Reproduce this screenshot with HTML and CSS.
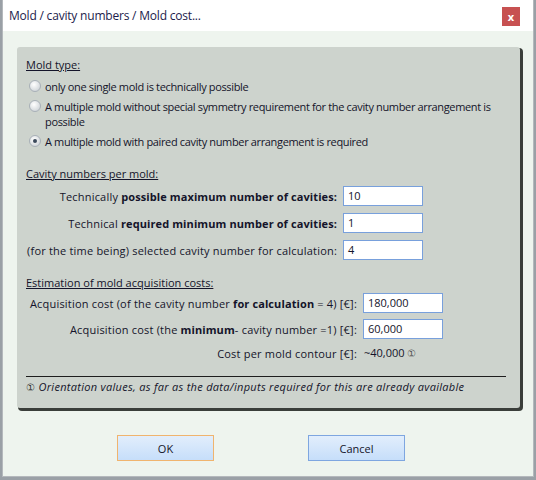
FILE: index.html
```html
<!DOCTYPE html>
<html lang="en">
<head>
    <meta charset="UTF-8">
    <meta name="viewport" content="width=device-width, initial-scale=1.0">
    <title>Mold / cavity numbers / Mold cost...</title>
    <link rel="stylesheet" href="styles.css">
</head>
<body>

    <div class="dialog">
        <div class="titlebar">
            <span class="title">Mold / cavity numbers / Mold cost...</span>
            <span class="close-btn">x</span>
        </div>

        <div class="content">
            <div class="panel">
                <div class="section-title">Mold type:</div>
                <div class="radio-list">
                    <div class="radio-row">
                        <span class="radio"></span>
                        <span>only one single mold is technically possible</span>
                    </div>
                    <div class="radio-row">
                        <span class="radio"></span>
                        <span>A multiple mold without special symmetry requirement for the cavity number arrangement is possible</span>
                    </div>
                    <div class="radio-row">
                        <span class="radio checked"></span>
                        <span>A multiple mold with paired cavity number arrangement is required</span>
                    </div>
                </div>

                <div class="section-title cavity-title">Cavity numbers per mold:</div>
                <div class="form-grid cavity-grid">
                    <div class="label">Technically <b>possible maximum number of cavities:</b></div>
                    <div class="field">10</div>
                    <div class="label">Technical <b>required minimum number of cavities:</b></div>
                    <div class="field">1</div>
                    <div class="label">(for the time being) selected cavity number for calculation:</div>
                    <div class="field">4</div>
                </div>

                <div class="section-title cost-title">Estimation of mold acquisition costs:</div>
                <div class="form-grid cost-grid">
                    <div class="label">Acquisition cost (of the cavity number <b>for calculation</b> = 4) [€]:</div>
                    <div class="field">180,000</div>
                    <div class="label">Acquisition cost (the <b>minimum</b>- cavity number =1) [€]:</div>
                    <div class="field">60,000</div>
                    <div class="label">Cost per mold contour [€]:</div>
                    <div class="value">~40,000 <span class="info">&#9312;</span></div>
                </div>

                <div class="footnote"><span class="info">&#9312;</span> Orientation values, as far as the data/inputs required for this are already available</div>
            </div>
        </div>

        <div class="buttons">
            <button class="ok-btn">OK</button>
            <button>Cancel</button>
        </div>
    </div>

</body>
</html>
```

FILE: styles.css
```css
body {
    margin: 0;
    padding: 0;
    background-color: #9aa0a6;
    font-family: "Open Sans", "Noto Sans", sans-serif;
    font-size: 11px;
    color: #14142a;
}
.dialog {
    margin-left: 2px;
    width: 532px;
    height: 477px;
    box-sizing: border-box;
    border: 1px solid #b4b8bc;
    border-top: none;
    background-color: #eef4ee;
    display: flex;
    flex-direction: column;
}
.titlebar {
    height: 31px;
    background-color: white;
    display: flex;
    align-items: center;
    justify-content: space-between;
    padding-left: 6px;
    padding-right: 13px;
}
.title {
    font-size: 12px;
    letter-spacing: -0.2px;
    color: #1c1c4c;
}
.close-btn {
    width: 18px;
    height: 19px;
    background-color: #c75151;
    color: white;
    font-weight: bold;
    font-size: 11px;
    display: flex;
    align-items: center;
    justify-content: center;
    margin-top: 2px;
}
.content {
    padding: 16px 11px 0 14px;
}
.panel {
    width: 503px;
    box-sizing: border-box;
    background-color: #cdd3cd;
    border-radius: 3px;
    box-shadow: 2px 2px 0 1px #3a3e3a;
    padding: 10px 12px 13px 9px;
    line-height: 15px;
}
.section-title {
    text-decoration: underline;
}
.radio-list {
    margin-top: 7px;
    display: flex;
    flex-direction: column;
    gap: 5px;
    letter-spacing: -0.35px;
}
.radio-row {
    display: flex;
    align-items: flex-start;
    gap: 4px;
    padding-left: 3px;
}
.radio {
    flex: none;
    width: 10px;
    height: 10px;
    margin-top: 1px;
    border-radius: 50%;
    border: 1px solid #a8b0b8;
    background: radial-gradient(circle at 40% 35%, #ffffff, #d6dade 70%);
    position: relative;
}
.radio.checked::after {
    content: "";
    position: absolute;
    left: 3px;
    top: 3px;
    width: 4px;
    height: 4px;
    border-radius: 50%;
    background-color: #3c4a5c;
}
.cavity-title {
    margin-top: 17px;
}
.form-grid {
    display: grid;
    align-items: center;
    column-gap: 6px;
}
.cavity-grid {
    grid-template-columns: 311px 80px;
    row-gap: 7px;
    margin-top: 5px;
}
.cost-grid {
    grid-template-columns: 331px 80px;
    row-gap: 6px;
    margin-top: 3px;
}
.label {
    text-align: right;
    white-space: nowrap;
    letter-spacing: 0.2px;
}
.label b {
    letter-spacing: 0.1px;
}
.field {
    height: 20px;
    box-sizing: border-box;
    border: 1px solid #78a0dc;
    background-color: white;
    padding-left: 4px;
    line-height: 18px;
}
.value {
    padding-left: 1px;
}
.info {
    color: #555;
    font-size: 10px;
}
.cost-title {
    margin-top: 15px;
}
.footnote {
    margin-top: 15px;
    border-top: 1px solid #1e1e1e;
    padding-top: 2px;
    font-style: italic;
    letter-spacing: 0.3px;
    margin-right: 2px;
}
.footnote .info {
    font-style: normal;
    color: #333;
}
.buttons {
    display: flex;
    gap: 94px;
    padding-left: 114px;
    margin-top: 27px;
}
.buttons button {
    width: 97px;
    height: 26px;
    font-family: "Open Sans", "Noto Sans", sans-serif;
    font-size: 11px;
    color: #14142a;
    background: linear-gradient(#e2eefc, #c6defa);
    border: 1px solid #7ea6e0;
    padding: 0;
}
.buttons .ok-btn {
    border-color: #f0b46e;
}
```
